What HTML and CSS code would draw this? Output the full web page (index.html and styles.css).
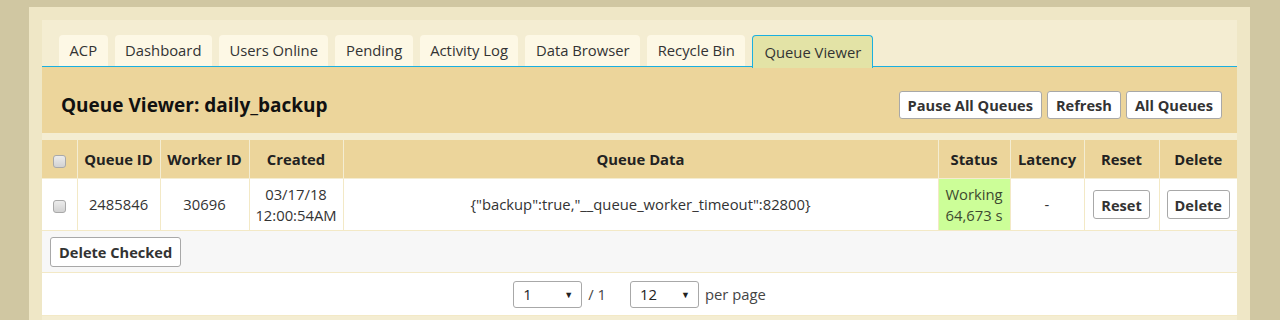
FILE: index.html
```html
<!DOCTYPE html>
<html>
<head>
<meta charset="utf-8">
<link rel="stylesheet" href="styles.css">
</head>
<body>
<div class="frame">
  <div class="inner">
    <ul class="tabs">
      <li class="tab">ACP</li>
      <li class="tab">Dashboard</li>
      <li class="tab">Users Online</li>
      <li class="tab">Pending</li>
      <li class="tab">Activity Log</li>
      <li class="tab">Data Browser</li>
      <li class="tab">Recycle Bin</li>
      <li class="tab active">Queue Viewer</li>
    </ul>
    <div class="panel-head">
      <h2 class="title">Queue Viewer: daily_backup</h2>
      <div class="actions">
        <button class="btn">Pause All Queues</button>
        <button class="btn">Refresh</button>
        <button class="btn">All Queues</button>
      </div>
    </div>
    <table class="grid">
      <colgroup>
        <col class="c-check"><col class="c-qid"><col class="c-wid"><col class="c-created"><col class="c-data"><col class="c-status"><col class="c-lat"><col class="c-reset"><col class="c-del">
      </colgroup>
      <thead>
        <tr>
          <th class="check"><input type="checkbox" class="cb"></th>
          <th>Queue ID</th>
          <th>Worker ID</th>
          <th>Created</th>
          <th>Queue Data</th>
          <th>Status</th>
          <th>Latency</th>
          <th>Reset</th>
          <th>Delete</th>
        </tr>
      </thead>
      <tbody>
        <tr class="data">
          <td class="check"><input type="checkbox" class="cb"></td>
          <td>2485846</td>
          <td>30696</td>
          <td>03/17/18<br>12:00:54AM</td>
          <td>{"backup":true,"__queue_worker_timeout":82800}</td>
          <td class="working">Working<br>64,673 s</td>
          <td>-</td>
          <td><button class="btn small">Reset</button></td>
          <td><button class="btn small">Delete</button></td>
        </tr>
        <tr class="foot">
          <td colspan="9"><button class="btn del-checked">Delete Checked</button></td>
        </tr>
        <tr class="pager">
          <td colspan="9">
            <div class="pager-inner">
              <span class="sel">1<span class="arrow">▼</span></span>
              <span class="of">/ 1</span>
              <span class="sel">12<span class="arrow">▼</span></span>
              <span class="pp">per page</span>
            </div>
          </td>
        </tr>
      </tbody>
    </table>
  </div>
</div>
</body>
</html>
```
FILE: styles.css
```css
html, body {
  margin: 0;
  padding: 0;
}
body {
  background: #d0c7a2;
  font-family: "Open Sans", "Liberation Sans", sans-serif;
  font-size: 14.8px;
  color: #333;
  height: 320px;
  overflow: hidden;
}
.frame {
  margin: 7px 30px 0 29px;
  background: #efe7c6;
  padding: 13px 13px 0 13px;
  height: 300px;
}
.inner {
  background: #f4edd2;
  padding-top: 15px;
  height: 285px;
}
.tabs {
  list-style: none;
  margin: 0;
  padding: 0 0 0 17px;
  display: flex;
  gap: 7px;
  border-bottom: 1px solid #1ab0e0;
  height: 31px;
}
.tab {
  background: #fdf8e5;
  border-radius: 4px 4px 0 0;
  padding: 0 10.5px;
  height: 31px;
  line-height: 31px;
  color: #333;
}
.tab.active {
  background: #e3e3a6;
  border: 1px solid #1ab0e0;
  border-bottom: none;
  height: 32px;
  line-height: 33px;
  padding: 0 11px;
}
.panel-head {
  background: #ecd59b;
  height: 66px;
  box-sizing: border-box;
  padding: 10px 15px 0 19px;
  display: flex;
  align-items: center;
  justify-content: space-between;
}
.title {
  margin: 0;
  font-size: 19px;
  font-weight: 700;
  color: #111;
}
.actions {
  display: flex;
  gap: 5px;
}
.btn {
  font-family: "Open Sans", "Liberation Sans", sans-serif;
  font-size: 14.6px;
  font-weight: 700;
  color: #333;
  background: #fff;
  border: 1px solid #a8a8a8;
  border-radius: 3px;
  height: 28px;
  padding: 0 8px;
  margin: 0;
  cursor: pointer;
}
.grid {
  margin-top: 7px;
  width: 1195px;
  border-collapse: collapse;
  table-layout: fixed;
}
.c-check { width: 35px; }
.c-qid { width: 83px; }
.c-wid { width: 89px; }
.c-created { width: 94px; }
.c-data { width: 595px; }
.c-status { width: 72px; }
.c-lat { width: 74px; }
.c-reset { width: 75px; }
.c-del { width: 78px; }
.grid th {
  background: #ecd59b;
  font-weight: 700;
  color: #222;
  height: 38px;
  padding: 0;
  text-align: center;
  border: 1px solid #f4edd2;
  border-top: none;
}
.grid td {
  text-align: center;
  padding: 0;
  border: 1px solid #f3e9c6;
  line-height: 21px;
}
.grid th:first-child, .grid td:first-child { border-left: none; }
.grid th:last-child, .grid td:last-child { border-right: none; }
.data td {
  background: #fff;
  height: 51px;
}
.check { text-align: center; }
.cb {
  appearance: none;
  -webkit-appearance: none;
  width: 13px;
  height: 13px;
  margin: 0;
  border: 1px solid #a9a9a9;
  border-radius: 3px;
  background: linear-gradient(#ececec, #d2d2d2);
  vertical-align: middle;
  display: inline-block;
}
.working {
  background: #ccfe98 !important;
  color: #3d4a30;
}
.btn.small {
  height: 29px;
  padding: 0 7px;
}
.foot td {
  background: #f7f7f7;
  height: 41px;
  text-align: left;
  padding: 0 0 0 8px;
}
.btn.del-checked {
  height: 30px;
  padding: 0 8px;
}
.pager td {
  background: #fff;
  height: 42px;
}
.pager-inner {
  display: flex;
  justify-content: center;
  align-items: center;
  padding-top: 1px;
}
.sel {
  width: 69px;
  height: 27px;
  box-sizing: border-box;
  border: 1px solid #a8a8a8;
  border-radius: 3px;
  display: flex;
  align-items: center;
  justify-content: space-between;
  padding: 0 8px 0 9px;
  color: #222;
  font-size: 14.8px;
  background: #fff;
}
.arrow {
  font-size: 9px;
  color: #222;
}
.of {
  margin: 0 24px 0 6px;
  color: #444;
}
.pp {
  margin-left: 6px;
  color: #444;
}
```
